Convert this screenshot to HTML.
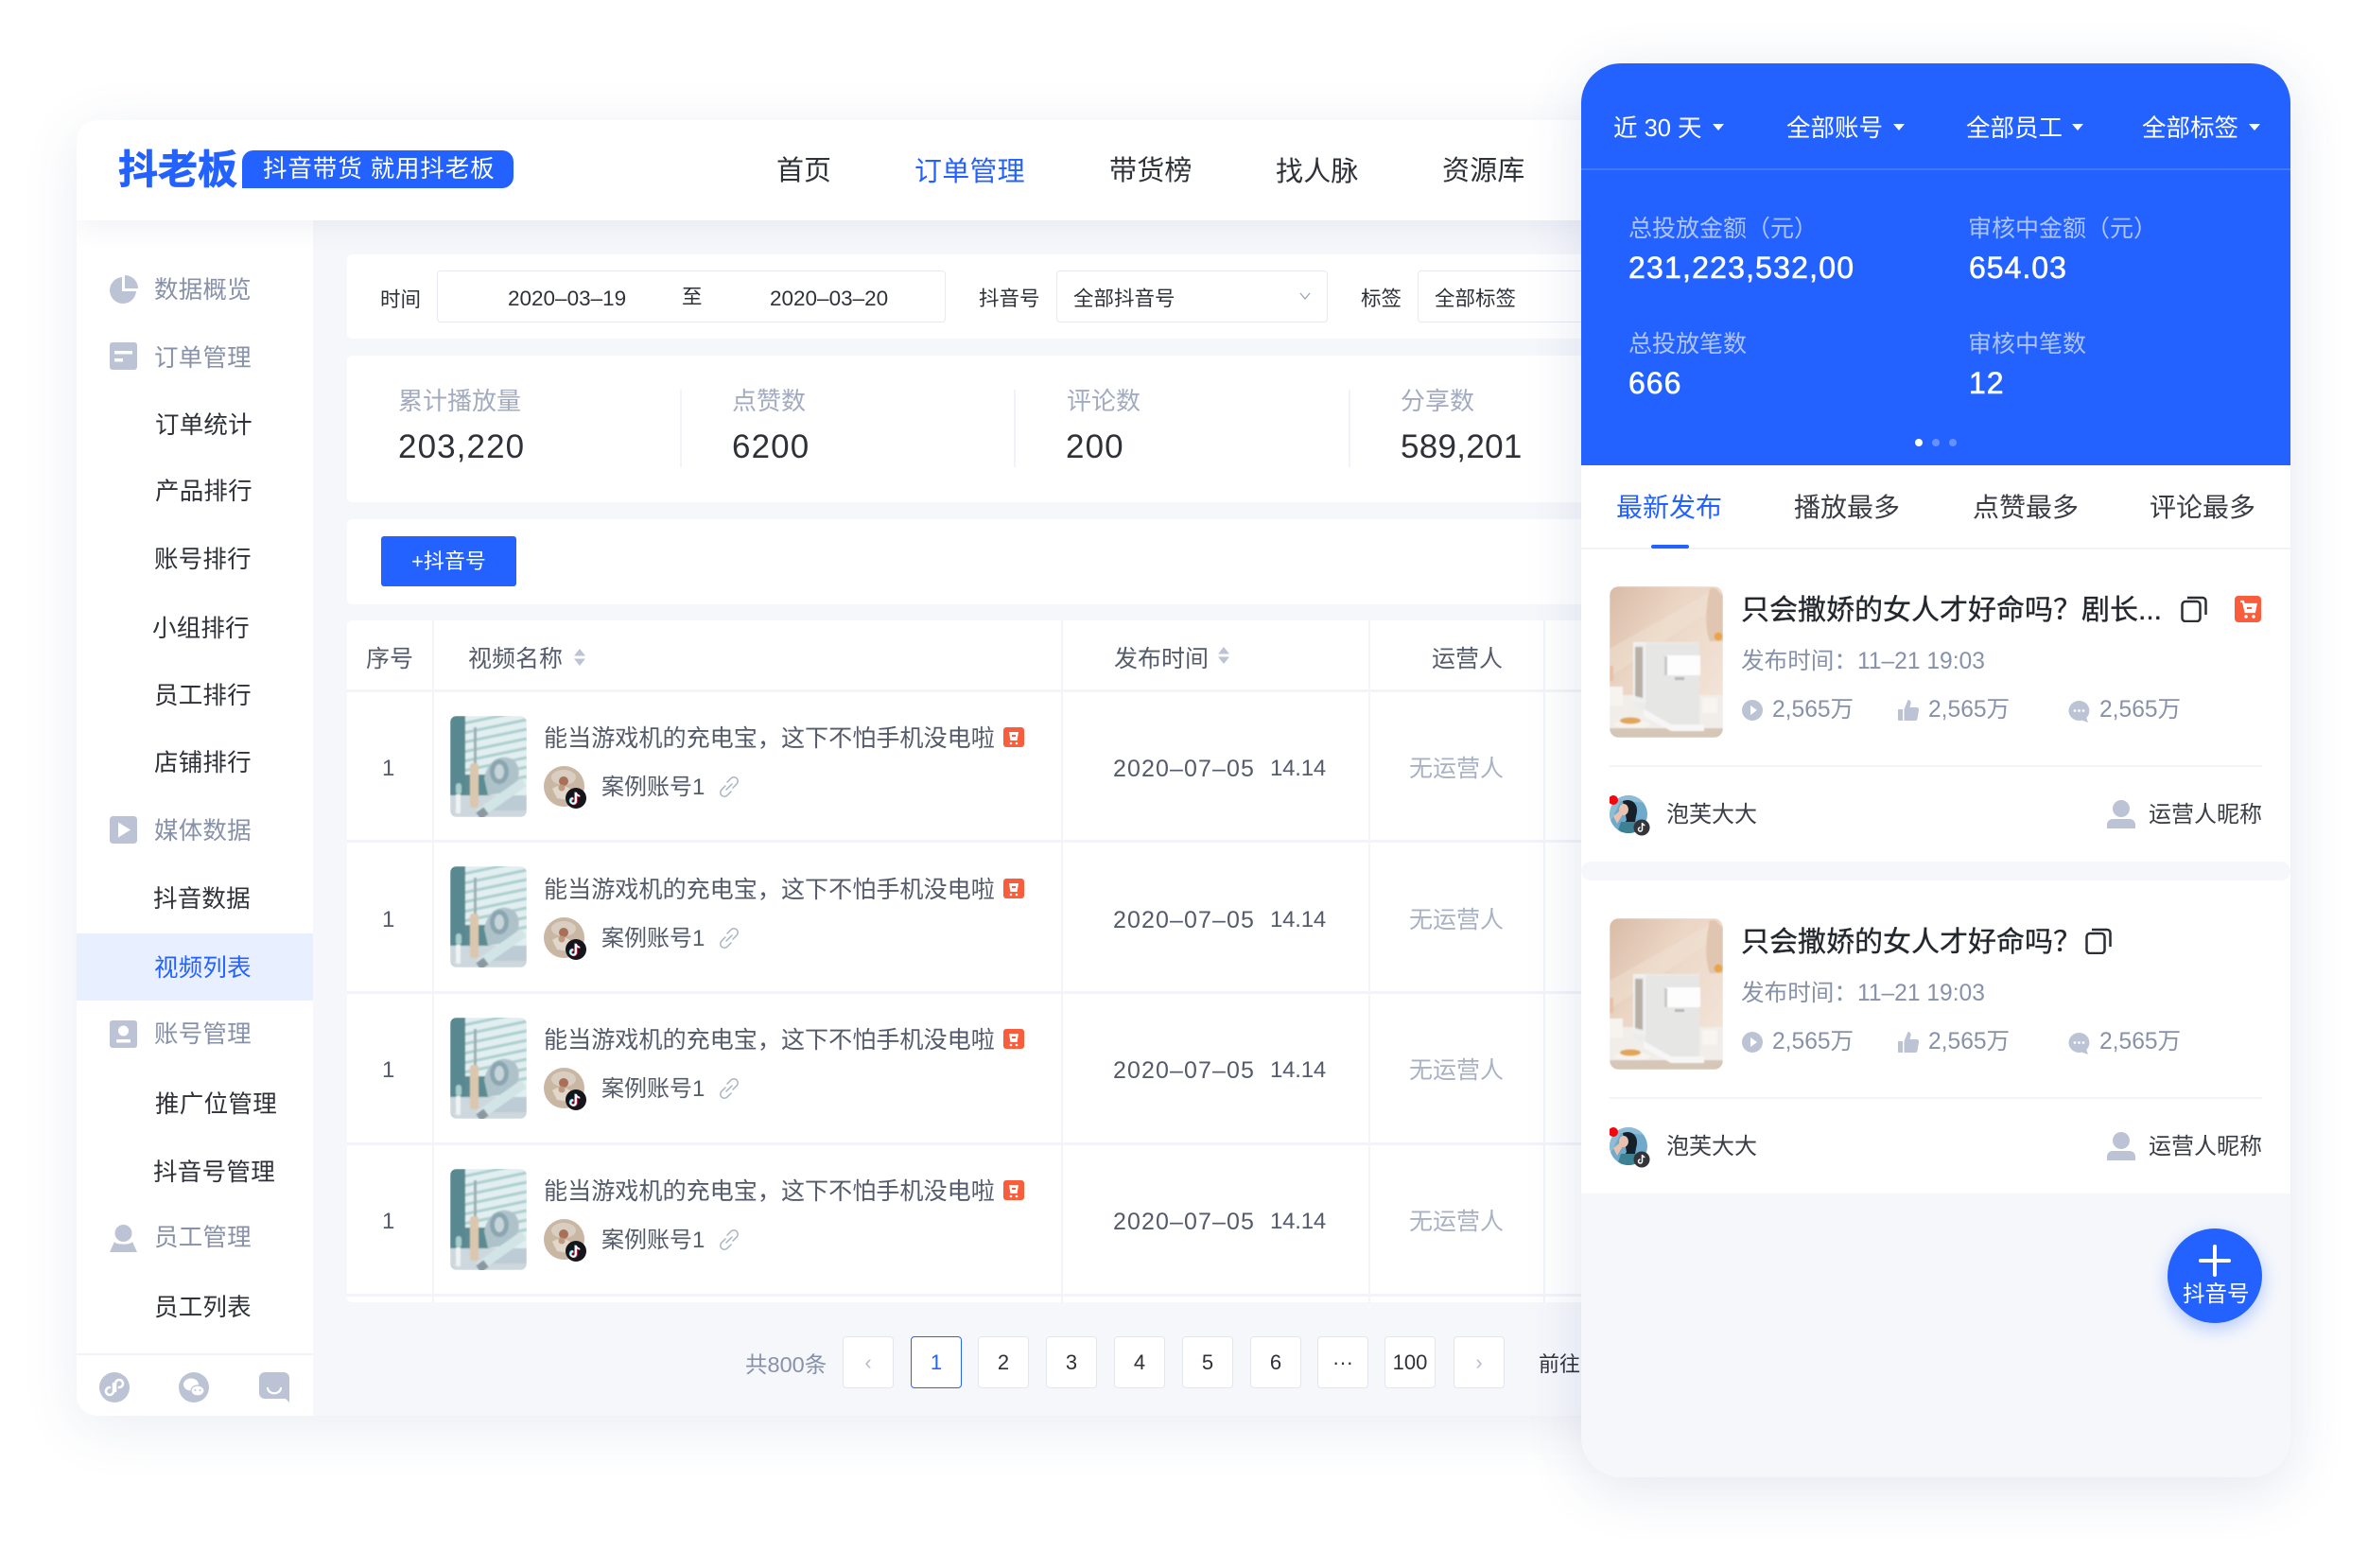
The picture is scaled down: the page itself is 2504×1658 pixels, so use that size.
<!DOCTYPE html>
<html lang="zh"><head><meta charset="utf-8"><title>抖老板</title>
<style>
html,body{margin:0;padding:0;background:#fff}
#p{position:relative;width:2504px;height:1658px;overflow:hidden;background:#fff;font-family:"Liberation Sans","Noto Sans CJK SC",sans-serif;color:#2e3138}
.a,.t,svg.i{position:absolute}
.t{white-space:nowrap;line-height:0;font-size:25px;margin-top:1.5px}
.s{font-size:25.5px;color:#8791a9}.c{font-size:25.5px;color:#2e3138}
.n{font-size:29px;color:#2e3138}
.f{font-size:21.5px;color:#2e3138}
.l{font-size:26px;color:#a3abc0;margin-top:-.5px}.v{font-size:35px;letter-spacing:1.1px;color:#2e3138;margin-top:0}
.g{color:#545b6b;margin-top:.5px}.d{font-size:25.1px;color:#545b6b;margin-top:.5px}
.m{color:#a9b1c4;margin-top:.5px}
.w{color:#fff}
.pb{position:absolute;top:1413px;width:52px;height:53px;line-height:54px;background:#fff;border:1px solid #e3e6ef;border-radius:4px;text-align:center;font-size:22px;color:#2e3138;box-sizing:content-box}
.hl{position:absolute;background:#f3f4f9;height:3px;left:367px;width:1320px}
.vl{position:absolute;background:#f3f4f9;width:2px;top:656px;height:721px}
.pl{font-size:25px;color:rgba(255,255,255,.62);margin-top:1px}
.pv{font-size:32px;letter-spacing:1px;color:#fff;-webkit-text-stroke:.6px #fff;margin-top:-1.5px}
.pf{font-size:25.5px;color:#fff}
.car{position:absolute;width:0;height:0;border-left:6px solid transparent;border-right:6px solid transparent;border-top:7px solid #fff}
.tb{font-size:28px;color:#3a3d45;margin-top:1px}
.pt{font-size:24.6px;color:#8791a9;margin-top:.5px}
.tt{font-size:30px;color:#24272e;-webkit-text-stroke:.35px #24272e;margin-top:1.5px}
.dt{font-size:25px;color:#545b6b;letter-spacing:1.1px;margin-top:.5px}
.tm{font-size:24px;color:#545b6b;margin-top:.5px}
</style></head><body><div id="p">

<svg width="0" height="0" style="position:absolute">
<defs>
<filter id="bl" x="-5%" y="-5%" width="110%" height="110%"><feGaussianBlur stdDeviation=".7"/></filter>
<clipPath id="cb"><rect width="81" height="107" rx="7"/></clipPath>
<clipPath id="cw"><rect width="120" height="160" rx="10"/></clipPath>
<symbol id="brush" viewBox="0 0 81 107"><g clip-path="url(#cb)"><g filter="url(#bl)">
<rect width="81" height="107" fill="#e2eeef"/>
<g stroke="#aacfd0" stroke-width="3" fill="none"><path d="M14 8L81 -6M14 18L81 4M14 28L81 14M14 38L81 24M14 48L81 34M14 58L81 44M34 64L81 54M46 72L81 64"/></g>
<rect width="16" height="84" fill="#588890"/>
<rect x="16" y="62" width="26" height="24" fill="#5a8c92"/>
<rect y="84" width="81" height="23" fill="#cdd7de"/>
<path d="M36 66C40 46 54 40 66 46C76 52 74 72 64 80L40 84Z" fill="#aec2ca"/>
<ellipse cx="52" cy="59" rx="10" ry="13" fill="#8ba6b0"/><ellipse cx="52" cy="59" rx="5" ry="8" fill="#c5d5da"/>
<rect x="25" y="12" width="3" height="40" fill="#9ab0b4"/>
<rect x="21" y="50" width="9" height="47" rx="3" fill="#dbc6ae"/>
<path d="M48 84H81V100H42Z" fill="#bccbd4"/>
<path d="M30 104L78 70" stroke="#d2e5e6" stroke-width="10"/>
<path d="M30 106L38 100" stroke="#8a99a1" stroke-width="9"/>
<rect x="6" y="71" width="6" height="12" rx="3" fill="#a9cdcd"/><rect x="6" y="83" width="5" height="20" fill="#eef2f3"/>
</g></g></symbol>
<symbol id="tt" viewBox="0 0 22 22"><circle cx="11" cy="11" r="11" fill="#15151c"/>
<path d="M11 5v9a2.800 2.800 0 1 1-2.800-2.800M11 5c.4 2.200 2 3.400 4 3.600" fill="none" stroke="#25e0e6" stroke-width="2" transform="translate(-.7 -.5)"/>
<path d="M11 5v9a2.800 2.800 0 1 1-2.800-2.800M11 5c.4 2.200 2 3.400 4 3.600" fill="none" stroke="#f5305c" stroke-width="2" transform="translate(.7 .5)"/>
<path d="M11 5v9a2.800 2.800 0 1 1-2.800-2.800M11 5c.4 2.200 2 3.400 4 3.600" fill="none" stroke="#fff" stroke-width="1.800"/></symbol>
<symbol id="av1" viewBox="0 0 45 45"><circle cx="21.500" cy="21.500" r="21.500" fill="#c9b7a4"/><ellipse cx="21" cy="12" rx="13" ry="8" fill="#d8cfc2"/><circle cx="21" cy="16" r="5" fill="#a96f58"/><path d="M9 24C15 19 26 20 32 28L26 36L14 34Z" fill="#e2d8ca"/><circle cx="19" cy="23" r="3.500" fill="#bd9a82"/><use href="#tt" x="23" y="23" width="22" height="22"/></symbol>
<symbol id="av2" viewBox="0 0 50 50"><clipPath id="ac"><circle cx="20" cy="20" r="20"/></clipPath><g clip-path="url(#ac)"><rect width="40" height="40" fill="#6fa9cc"/><path d="M0 30L12 6L40 8V0H0Z" fill="#8cbcd6"/><path d="M14 6C24 2 32 10 28 22L26 34L34 40H10L18 26Z" fill="#15202a"/><ellipse cx="15" cy="15" rx="5" ry="6" fill="#e9c1ae"/><path d="M4 22L14 14L14 20L8 30Z" fill="#e9c1ae"/><path d="M12 28H30L36 40H8Z" fill="#3c8294"/></g><circle cx="34" cy="34" r="8.500" fill="#33353b"/><path d="M34.500 29v7a2 2 0 1 1-2-2M34.500 29c.3 1.500 1.400 2.400 2.900 2.600" fill="none" stroke="#fff" stroke-width="1.500"/><circle cx="4" cy="5" r="5" fill="#f4060c"/></symbol>
<symbol id="pr" viewBox="0 0 120 160"><g clip-path="url(#cw)"><g filter="url(#bl)">
<defs><linearGradient id="bgg" x1="0" y1="0" x2="1" y2=".9"><stop offset="0" stop-color="#d9bba6"/><stop offset=".4" stop-color="#ebd6c5"/><stop offset="1" stop-color="#f3e6da"/></linearGradient></defs>
<rect width="120" height="160" fill="url(#bgg)"/>
<path d="M0 66L110 4H120V16L0 96Z" fill="#f3e6d8" opacity=".4"/>
<path d="M106 2C102 20 100 42 106 58H120V10L112 2Z" fill="#e0c6b0"/><circle cx="115" cy="53" r="4.500" fill="#e8a546"/>
<rect y="115" width="120" height="35" fill="#f1eeea"/><rect y="150" width="120" height="10" fill="#d6c6b7"/>
<rect y="106" width="14" height="20" fill="#f7f4f0"/><rect x="0" y="84" width="4" height="16" fill="#e6bfa8"/>
<path d="M25 59H95V146H62L25 127Z" fill="#ececeb"/><path d="M27 64H35V118L27 116Z" fill="#b8b0a6"/><path d="M26 60H38V122L26 120Z" fill="none" stroke="#f2f2f2" stroke-width="2"/>
<path d="M38 60H95V146H64L38 130Z" fill="#e6e6e5"/><rect x="60" y="73" width="36" height="21" rx="1" fill="#fdfdfd"/><rect x="58" y="74" width="3" height="20" fill="#c9c9c9"/>
<rect x="69" y="96" width="10" height="3" fill="#b5b5b5"/><path d="M36 130L65 146H100V153H65L36 137Z" fill="#f6f6f6"/>
<rect x="98" y="118" width="16" height="16" rx="2" fill="#f8f5f1"/>
<ellipse cx="24" cy="146" rx="19" ry="4" fill="#f7f3ee"/><ellipse cx="22" cy="142" rx="11" ry="3.500" fill="#e2a65a"/>
</g></g></symbol>
<symbol id="cart" viewBox="0 0 28 28"><rect width="28" height="28" rx="4" fill="#fa5d3b"/><path d="M6 6h3l2.500 11h9.500l1.500-8H9.600" fill="none" stroke="#fff" stroke-width="2.200"/><path d="M10 9h12l-1.500 8h-9Z" fill="#fff"/><rect x="13" y="12" width="5" height="2" fill="#fa5d3b"/><circle cx="12" cy="22" r="1.800" fill="#fff"/><circle cx="20" cy="22" r="1.800" fill="#fff"/></symbol>
<symbol id="copy" viewBox="0 0 28 28"><rect x="1.500" y="6" width="19" height="21" rx="3.500" fill="none" stroke="#2b2e35" stroke-width="2.500"/><path d="M7 2h16a3.500 3.500 0 0 1 3.500 3.500V20" fill="none" stroke="#2b2e35" stroke-width="2.500"/></symbol>
<symbol id="play" viewBox="0 0 22 22"><circle cx="11" cy="11" r="11" fill="#bcc3d5"/><path d="M9 6l7 5-7 5z" fill="#fff"/></symbol>
<symbol id="like" viewBox="0 0 22 22"><path d="M0 10h5v12H1a1 1 0 0 1-1-1zM6.500 10l4-10c2 0 3.500 1.500 3 4l-1 4h7c2 0 3 1.500 2.500 3l-1.500 9c-.3 1.300-1 2-2.500 2H6.500z" fill="#bcc3d5"/></symbol>
<symbol id="cmt" viewBox="0 0 23 23"><path d="M11.500 0a11 10.500 0 1 0 3 20.600L21 23l-1.800-5A10.500 10.500 0 0 0 11.500 0z" fill="#bcc3d5"/><circle cx="7" cy="10.500" r="1.400" fill="#fff"/><circle cx="11.500" cy="10.500" r="1.400" fill="#fff"/><circle cx="16" cy="10.500" r="1.400" fill="#fff"/></symbol>
<symbol id="op" viewBox="0 0 30 30"><circle cx="15" cy="9" r="9" fill="#bcc3d5"/><path d="M0 26a6 6 0 0 1 6-6h18a6 6 0 0 1 6 6v4H0z" fill="#bcc3d5"/></symbol>
<symbol id="red" viewBox="0 0 22 21"><rect width="22" height="21" rx="3" fill="#fa5d3b"/><path d="M6 5h10l-1.500 9h-7z" fill="#fff"/><rect x="9" y="8" width="4" height="2" fill="#fa5d3b"/><circle cx="8" cy="17" r="1.300" fill="#fff"/><circle cx="14" cy="17" r="1.300" fill="#fff"/></symbol>
<symbol id="lnk" viewBox="0 0 24 24"><path d="M10 7l4-4a4.200 4.200 0 0 1 6 6l-4 4M14 17l-4 4a4.200 4.200 0 0 1-6-6l4-4M9 15l6-6" fill="none" stroke="#a9b1c4" stroke-width="1.500" stroke-linecap="round"/></symbol>
<symbol id="sort" viewBox="0 0 14 18"><path d="M7 0l6 7.500H1zM7 18L1 10.500h12z" fill="#bcc3d5"/></symbol>
</defs></svg>

<!-- main card -->
<div class="a" style="left:81px;top:127px;width:1640px;height:1370px;background:#f5f7fb;border-radius:22px;box-shadow:0 12px 60px rgba(60,80,140,.10);overflow:hidden">
 <div class="a" style="left:0;top:106px;width:250px;height:1264px;background:#fff"></div>
 <div class="a" style="left:0;top:0;width:1640px;height:106px;background:#fff;box-shadow:0 8px 26px rgba(50,70,120,.07)"></div>
</div>

<!-- header -->
<div class="t" style="left:125px;top:178px;font-size:42px;font-weight:700;color:#2462ff;-webkit-text-stroke:.8px #2462ff">抖老板</div>
<div class="a" style="left:256px;top:159px;width:287px;height:40px;background:#2462ff;border-radius:12px 12px 12px 0"></div>
<div class="t w" style="left:278px;top:177px;font-size:25.500px;letter-spacing:.9px">抖音带货 就用抖老板</div>
<div class="t n" style="left:821px;top:179px">首页</div>
<div class="t n" style="left:967px;top:180px;color:#2462ff;letter-spacing:.2px">订单管理</div>
<div class="t n" style="left:1173px;top:179px;letter-spacing:.2px">带货榜</div>
<div class="t n" style="left:1349px;top:180px;letter-spacing:.2px">找人脉</div>
<div class="t n" style="left:1525px;top:179px;letter-spacing:.2px">资源库</div>

<!-- sidebar -->
<div class="a" style="left:81px;top:987px;width:250px;height:71px;background:#e8efff"></div>
<div class="a" style="left:81px;top:1431px;width:250px;height:2px;background:#f1f3f8"></div>
<svg class="i" style="left:116px;top:291px" width="30" height="30" viewBox="0 0 30 30"><path d="M13 2A14 14 0 1 0 28 17H13z" fill="#bcc3d5"/><path d="M16 0a14 14 0 0 1 14 14H16z" fill="#bcc3d5"/></svg>
<svg class="i" style="left:116px;top:362px" width="29" height="29" viewBox="0 0 29 29"><rect width="29" height="29" rx="3" fill="#bcc3d5"/><rect x="5" y="9" width="19" height="3.500" fill="#fff"/><rect x="5" y="17" width="9" height="3.500" fill="#fff"/></svg>
<svg class="i" style="left:116px;top:863px" width="29" height="29" viewBox="0 0 29 29"><rect width="29" height="29" rx="3.500" fill="#bcc3d5"/><path d="M9 6.500L22 14.500 9 22.500z" fill="#fff"/></svg>
<svg class="i" style="left:116px;top:1079px" width="29" height="29" viewBox="0 0 29 29"><rect width="29" height="29" rx="3" fill="#bcc3d5"/><circle cx="14.500" cy="11" r="5.500" fill="#fff"/><rect x="7" y="20" width="15" height="3.500" rx="1" fill="#fff"/></svg>
<svg class="i" style="left:116px;top:1295px" width="29" height="29" viewBox="0 0 29 29"><circle cx="14.500" cy="9" r="9" fill="#bcc3d5"/><path d="M5 18c2 3.500 17 3.500 19 0l5 11H0z" fill="#bcc3d5"/></svg>
<div class="t s" style="left:163px;top:305px;letter-spacing:.2px">数据概览</div>
<div class="t s" style="left:163px;top:377px;letter-spacing:.2px">订单管理</div>
<div class="t c" style="left:164px;top:448px;letter-spacing:.2px">订单统计</div>
<div class="t c" style="left:164px;top:518px;letter-spacing:.2px">产品排行</div>
<div class="t c" style="left:163px;top:590px;letter-spacing:.2px">账号排行</div>
<div class="t c" style="left:161px;top:663px;letter-spacing:.2px">小组排行</div>
<div class="t c" style="left:163px;top:734px;letter-spacing:.2px">员工排行</div>
<div class="t c" style="left:163px;top:805px;letter-spacing:.2px">店铺排行</div>
<div class="t s" style="left:163px;top:877px;letter-spacing:.2px">媒体数据</div>
<div class="t c" style="left:162px;top:949px;letter-spacing:.2px">抖音数据</div>
<div class="t" style="left:163px;top:1022px;font-size:25.500px;color:#2462ff;letter-spacing:.2px">视频列表</div>
<div class="t s" style="left:163px;top:1092px;letter-spacing:.2px">账号管理</div>
<div class="t c" style="left:164px;top:1166px;letter-spacing:.3px">推广位管理</div>
<div class="t c" style="left:162px;top:1238px;letter-spacing:.3px">抖音号管理</div>
<div class="t s" style="left:163px;top:1307px;letter-spacing:.2px">员工管理</div>
<div class="t c" style="left:163px;top:1381px;letter-spacing:.2px">员工列表</div>
<svg class="i" style="left:105px;top:1451px" width="32" height="32" viewBox="0 0 32 32"><circle cx="16" cy="16" r="16" fill="#bcc3d5"/><path d="M15 12v8a4 4 0 1 1-4-4M17 20v-8a4 4 0 1 1 4 4" fill="none" stroke="#fff" stroke-width="2.600" stroke-linecap="round"/></svg>
<svg class="i" style="left:189px;top:1451px" width="32" height="32" viewBox="0 0 32 32"><circle cx="16" cy="16" r="16" fill="#bcc3d5"/><ellipse cx="13" cy="13" rx="8" ry="6.500" fill="#fff"/><ellipse cx="20" cy="19.500" rx="7" ry="5.500" fill="#fff" stroke="#bcc3d5" stroke-width="1.200"/><circle cx="17.500" cy="19" r="1" fill="#bcc3d5"/><circle cx="22.500" cy="19" r="1" fill="#bcc3d5"/></svg>
<svg class="i" style="left:274px;top:1451px" width="32" height="32" viewBox="0 0 32 32"><path d="M6 0h20a6 6 0 0 1 6 6v26l-4-4H6a6 6 0 0 1-6-6V6a6 6 0 0 1 6-6z" fill="#bcc3d5"/><path d="M9 17c1 7 13 7 14 0" fill="none" stroke="#fff" stroke-width="2.200" stroke-linecap="round"/></svg>

<!-- filter -->
<div class="a" style="left:367px;top:269px;width:1320px;height:89px;background:#fff;border-radius:5px"></div>
<div class="t f" style="left:402px;top:315px">时间</div>
<div class="a" style="left:462px;top:286px;width:536px;height:53px;background:#fff;border:1px solid #e7e9f1;border-radius:4px"></div>
<div class="t f" style="left:537px;top:314px;font-size:22.500px">2020–03–19</div>
<div class="t f" style="left:721px;top:312px">至</div>
<div class="t f" style="left:814px;top:314px;font-size:22.500px">2020–03–20</div>
<div class="t f" style="left:1035px;top:314px">抖音号</div>
<div class="a" style="left:1117px;top:286px;width:285px;height:53px;background:#fff;border:1px solid #e7e9f1;border-radius:4px"></div>
<div class="t f" style="left:1135px;top:314px">全部抖音号</div>
<svg class="i" style="left:1374px;top:309px" width="12" height="9" viewBox="0 0 12 9"><path d="M1 1l5 6 5-6" fill="none" stroke="#9aa3b8" stroke-width="1.300"/></svg>
<div class="t f" style="left:1439px;top:314px">标签</div>
<div class="a" style="left:1499px;top:286px;width:286px;height:53px;background:#fff;border:1px solid #e7e9f1;border-radius:4px"></div>
<div class="t f" style="left:1517px;top:314px">全部标签</div>

<!-- stats -->
<div class="a" style="left:367px;top:376px;width:1320px;height:155px;background:#fff;border-radius:5px"></div>
<div class="a" style="left:719px;top:412px;width:2px;height:82px;background:#f1f3f8"></div>
<div class="a" style="left:1072px;top:412px;width:2px;height:82px;background:#f1f3f8"></div>
<div class="a" style="left:1426px;top:412px;width:2px;height:82px;background:#f1f3f8"></div>
<div class="t l" style="left:421px;top:424px">累计播放量</div>
<div class="t v" style="left:421px;top:473px">203,220</div>
<div class="t l" style="left:774px;top:424px">点赞数</div>
<div class="t v" style="left:774px;top:473px">6200</div>
<div class="t l" style="left:1128px;top:424px">评论数</div>
<div class="t v" style="left:1127px;top:473px">200</div>
<div class="t l" style="left:1481px;top:424px">分享数</div>
<div class="t v" style="left:1481px;top:473px;letter-spacing:.3px">589,201</div>

<!-- button card -->
<div class="a" style="left:367px;top:549px;width:1320px;height:90px;background:#fff;border-radius:5px"></div>
<div class="a" style="left:403px;top:567px;width:143px;height:53px;line-height:53px;background:#2462ff;border-radius:3px;text-align:center;color:#fff;font-size:22px">+抖音号</div>

<!-- table -->
<div class="a" style="left:367px;top:656px;width:1320px;height:721px;background:#fff;border-radius:5px"></div>
<div class="vl" style="left:457px"></div><div class="vl" style="left:1122px"></div><div class="vl" style="left:1447px"></div><div class="vl" style="left:1632px"></div>
<div class="hl" style="top:729px"></div><div class="hl" style="top:888px"></div><div class="hl" style="top:1048px"></div><div class="hl" style="top:1208px"></div><div class="hl" style="top:1368px"></div>
<div class="t g" style="left:387px;top:696px">序号</div>
<div class="t g" style="left:495px;top:696px">视频名称</div>
<svg class="i" style="left:606px;top:686px" width="14" height="18"><use href="#sort" width="14" height="18"/></svg>
<div class="t g" style="left:1178px;top:696px">发布时间</div>
<svg class="i" style="left:1287px;top:684px" width="14" height="18"><use href="#sort" width="14" height="18"/></svg>
<div class="t g" style="left:1514px;top:696px">运营人</div>

<!-- row 1 -->
<div class="t g" style="left:404px;top:812px;font-size:24px">1</div>
<svg class="i" style="left:476px;top:757px" width="81" height="107"><use href="#brush" width="81" height="107"/></svg>
<div class="t d" style="left:575px;top:780px">能当游戏机的充电宝，这下不怕手机没电啦</div>
<svg class="i" style="left:1061px;top:769px" width="22" height="21"><use href="#red" width="22" height="21"/></svg>
<svg class="i" style="left:575px;top:810px" width="45" height="45"><use href="#av1" width="45" height="45"/></svg>
<div class="t g" style="left:636px;top:832px;font-size:24px">案例账号1</div>
<svg class="i" style="left:759px;top:820px" width="24" height="24"><use href="#lnk" width="24" height="24"/></svg>
<div class="t dt" style="left:1177px;top:812px">2020–07–05</div><div class="t tm" style="left:1343px;top:812px;letter-spacing:-.2px">14.14</div>
<div class="t m" style="left:1490px;top:812px">无运营人</div>
<!-- row 2 -->
<div class="t g" style="left:404px;top:972px;font-size:24px">1</div>
<svg class="i" style="left:476px;top:916px" width="81" height="107"><use href="#brush" width="81" height="107"/></svg>
<div class="t d" style="left:575px;top:940px">能当游戏机的充电宝，这下不怕手机没电啦</div>
<svg class="i" style="left:1061px;top:929px" width="22" height="21"><use href="#red" width="22" height="21"/></svg>
<svg class="i" style="left:575px;top:970px" width="45" height="45"><use href="#av1" width="45" height="45"/></svg>
<div class="t g" style="left:636px;top:992px;font-size:24px">案例账号1</div>
<svg class="i" style="left:759px;top:980px" width="24" height="24"><use href="#lnk" width="24" height="24"/></svg>
<div class="t dt" style="left:1177px;top:972px">2020–07–05</div><div class="t tm" style="left:1343px;top:972px;letter-spacing:-.2px">14.14</div>
<div class="t m" style="left:1490px;top:972px">无运营人</div>
<!-- row 3 -->
<div class="t g" style="left:404px;top:1131px;font-size:24px">1</div>
<svg class="i" style="left:476px;top:1076px" width="81" height="107"><use href="#brush" width="81" height="107"/></svg>
<div class="t d" style="left:575px;top:1099px">能当游戏机的充电宝，这下不怕手机没电啦</div>
<svg class="i" style="left:1061px;top:1088px" width="22" height="21"><use href="#red" width="22" height="21"/></svg>
<svg class="i" style="left:575px;top:1129px" width="45" height="45"><use href="#av1" width="45" height="45"/></svg>
<div class="t g" style="left:636px;top:1151px;font-size:24px">案例账号1</div>
<svg class="i" style="left:759px;top:1139px" width="24" height="24"><use href="#lnk" width="24" height="24"/></svg>
<div class="t dt" style="left:1177px;top:1131px">2020–07–05</div><div class="t tm" style="left:1343px;top:1131px;letter-spacing:-.2px">14.14</div>
<div class="t m" style="left:1490px;top:1131px">无运营人</div>
<!-- row 4 -->
<div class="t g" style="left:404px;top:1291px;font-size:24px">1</div>
<svg class="i" style="left:476px;top:1236px" width="81" height="107"><use href="#brush" width="81" height="107"/></svg>
<div class="t d" style="left:575px;top:1259px">能当游戏机的充电宝，这下不怕手机没电啦</div>
<svg class="i" style="left:1061px;top:1248px" width="22" height="21"><use href="#red" width="22" height="21"/></svg>
<svg class="i" style="left:575px;top:1289px" width="45" height="45"><use href="#av1" width="45" height="45"/></svg>
<div class="t g" style="left:636px;top:1311px;font-size:24px">案例账号1</div>
<svg class="i" style="left:759px;top:1299px" width="24" height="24"><use href="#lnk" width="24" height="24"/></svg>
<div class="t dt" style="left:1177px;top:1291px">2020–07–05</div><div class="t tm" style="left:1343px;top:1291px;letter-spacing:-.2px">14.14</div>
<div class="t m" style="left:1490px;top:1291px">无运营人</div>

<!-- pagination -->
<div class="t" style="left:788px;top:1441px;font-size:23.500px;color:#8791a9">共800条</div>
<div class="pb" style="left:891px;color:#b5bccd">‹</div>
<div class="pb" style="left:963px;border-color:#2462ff;color:#2462ff">1</div>
<div class="pb" style="left:1034px">2</div>
<div class="pb" style="left:1106px">3</div>
<div class="pb" style="left:1178px">4</div>
<div class="pb" style="left:1250px">5</div>
<div class="pb" style="left:1322px">6</div>
<div class="pb" style="left:1393px">···</div>
<div class="pb" style="left:1464px">100</div>
<div class="pb" style="left:1537px;color:#b5bccd">›</div>
<div class="t f" style="left:1627px;top:1441px;font-size:22px">前往</div>

<!-- phone -->
<div class="a" style="left:1672px;top:67px;width:750px;height:1495px;background:#f5f7fb;border-radius:42px;box-shadow:0 12px 60px rgba(60,80,140,.14);overflow:hidden">
 <div class="a" style="left:0;top:0;width:750px;height:425px;background:#2462ff"></div>
 <div class="a" style="left:0;top:111px;width:750px;height:2px;background:rgba(255,255,255,.14)"></div>
 <div class="a" style="left:0;top:425px;width:750px;height:770px;background:#fff"></div>
 <div class="a" style="left:0;top:512px;width:750px;height:2px;background:#f1f3f8"></div>
 <div class="a" style="left:74px;top:509px;width:40px;height:4px;border-radius:2px;background:#2462ff"></div>
 <div class="a" style="left:0;top:844px;width:750px;height:20px;background:#f5f7fb;border-radius:10px"></div>
 <div class="a" style="left:0;top:1195px;width:750px;height:20px;background:#f5f7fb;border-radius:10px 10px 0 0"></div>
 <div class="a" style="left:30px;top:742px;width:690px;height:2px;background:#f3f4f9"></div>
 <div class="a" style="left:30px;top:1093px;width:690px;height:2px;background:#f3f4f9"></div>
</div>
<div class="t pf" style="left:1706px;top:134px">近 30 天</div><div class="car" style="left:1811px;top:131px"></div>
<div class="t pf" style="left:1889px;top:134px">全部账号</div><div class="car" style="left:2002px;top:131px"></div>
<div class="t pf" style="left:2079px;top:134px">全部员工</div><div class="car" style="left:2191px;top:131px"></div>
<div class="t pf" style="left:2265px;top:134px">全部标签</div><div class="car" style="left:2378px;top:131px"></div>
<div class="t pl" style="left:1722px;top:241px">总投放金额（元）</div>
<div class="t pv" style="left:1722px;top:284px;letter-spacing:1.200px">231,223,532,00</div>
<div class="t pl" style="left:2081px;top:241px">审核中金额（元）</div>
<div class="t pv" style="left:2082px;top:284px">654.03</div>
<div class="t pl" style="left:1722px;top:363px">总投放笔数</div>
<div class="t pv" style="left:1722px;top:406px">666</div>
<div class="t pl" style="left:2081px;top:363px">审核中笔数</div>
<div class="t pv" style="left:2082px;top:406px">12</div>
<div class="a" style="left:2025px;top:464px;width:8px;height:8px;border-radius:50%;background:#fff"></div>
<div class="a" style="left:2043px;top:464px;width:8px;height:8px;border-radius:50%;background:rgba(255,255,255,.3)"></div>
<div class="a" style="left:2061px;top:464px;width:8px;height:8px;border-radius:50%;background:rgba(255,255,255,.3)"></div>
<div class="t tb" style="left:1709px;top:536px;color:#2462ff">最新发布</div>
<div class="t tb" style="left:1897px;top:536px">播放最多</div>
<div class="t tb" style="left:2086px;top:536px">点赞最多</div>
<div class="t tb" style="left:2273px;top:536px">评论最多</div>

<!-- card 1 -->
<svg class="i" style="left:1702px;top:620px" width="120" height="160"><use href="#pr" width="120" height="160"/></svg>
<div class="t tt" style="left:1841px;top:644px">只会撒娇的女人才好命吗？剧长...</div>
<svg class="i" style="left:2306px;top:630px" width="28" height="28"><use href="#copy" width="28" height="28"/></svg>
<svg class="i" style="left:2363px;top:630px" width="28" height="28"><use href="#cart" width="28" height="28"/></svg>
<div class="t pt" style="left:1841px;top:699px">发布时间：11–21 19:03</div>
<svg class="i" style="left:1842px;top:740px" width="22" height="22"><use href="#play" width="22" height="22"/></svg>
<div class="t pt" style="left:1874px;top:750px">2,565万</div>
<svg class="i" style="left:2007px;top:740px" width="22" height="22"><use href="#like" width="22" height="22"/></svg>
<div class="t pt" style="left:2039px;top:750px">2,565万</div>
<svg class="i" style="left:2187px;top:741px" width="23" height="23"><use href="#cmt" width="23" height="23"/></svg>
<div class="t pt" style="left:2220px;top:750px">2,565万</div>
<svg class="i" style="left:1702px;top:841px" width="50" height="50"><use href="#av2" width="50" height="50"/></svg>
<div class="t" style="left:1762px;top:860px;font-size:24px;color:#3a3d45">泡芙大大</div>
<svg class="i" style="left:2228px;top:846px" width="30" height="30"><use href="#op" width="30" height="30"/></svg>
<div class="t" style="left:2272px;top:860px;font-size:24px;color:#3a3d45">运营人昵称</div>

<!-- card 2 -->
<svg class="i" style="left:1702px;top:971px" width="120" height="160"><use href="#pr" width="120" height="160"/></svg>
<div class="t tt" style="left:1841px;top:995px">只会撒娇的女人才好命吗？</div>
<svg class="i" style="left:2205px;top:981px" width="28" height="28"><use href="#copy" width="28" height="28"/></svg>
<div class="t pt" style="left:1841px;top:1050px">发布时间：11–21 19:03</div>
<svg class="i" style="left:1842px;top:1091px" width="22" height="22"><use href="#play" width="22" height="22"/></svg>
<div class="t pt" style="left:1874px;top:1101px">2,565万</div>
<svg class="i" style="left:2007px;top:1091px" width="22" height="22"><use href="#like" width="22" height="22"/></svg>
<div class="t pt" style="left:2039px;top:1101px">2,565万</div>
<svg class="i" style="left:2187px;top:1092px" width="23" height="23"><use href="#cmt" width="23" height="23"/></svg>
<div class="t pt" style="left:2220px;top:1101px">2,565万</div>
<svg class="i" style="left:1702px;top:1192px" width="50" height="50"><use href="#av2" width="50" height="50"/></svg>
<div class="t" style="left:1762px;top:1211px;font-size:24px;color:#3a3d45">泡芙大大</div>
<svg class="i" style="left:2228px;top:1197px" width="30" height="30"><use href="#op" width="30" height="30"/></svg>
<div class="t" style="left:2272px;top:1211px;font-size:24px;color:#3a3d45">运营人昵称</div>

<!-- fab -->
<div class="a" style="left:2292px;top:1299px;width:100px;height:100px;border-radius:50%;background:#2462ff;box-shadow:0 6px 18px rgba(36,98,255,.32)"></div>
<div class="a" style="left:2325px;top:1331px;width:34px;height:4px;border-radius:2px;background:#fff"></div>
<div class="a" style="left:2340px;top:1316px;width:4px;height:34px;border-radius:2px;background:#fff"></div>
<div class="t w" style="left:2308px;top:1366px;font-size:23.500px">抖音号</div>

</div></body></html>
